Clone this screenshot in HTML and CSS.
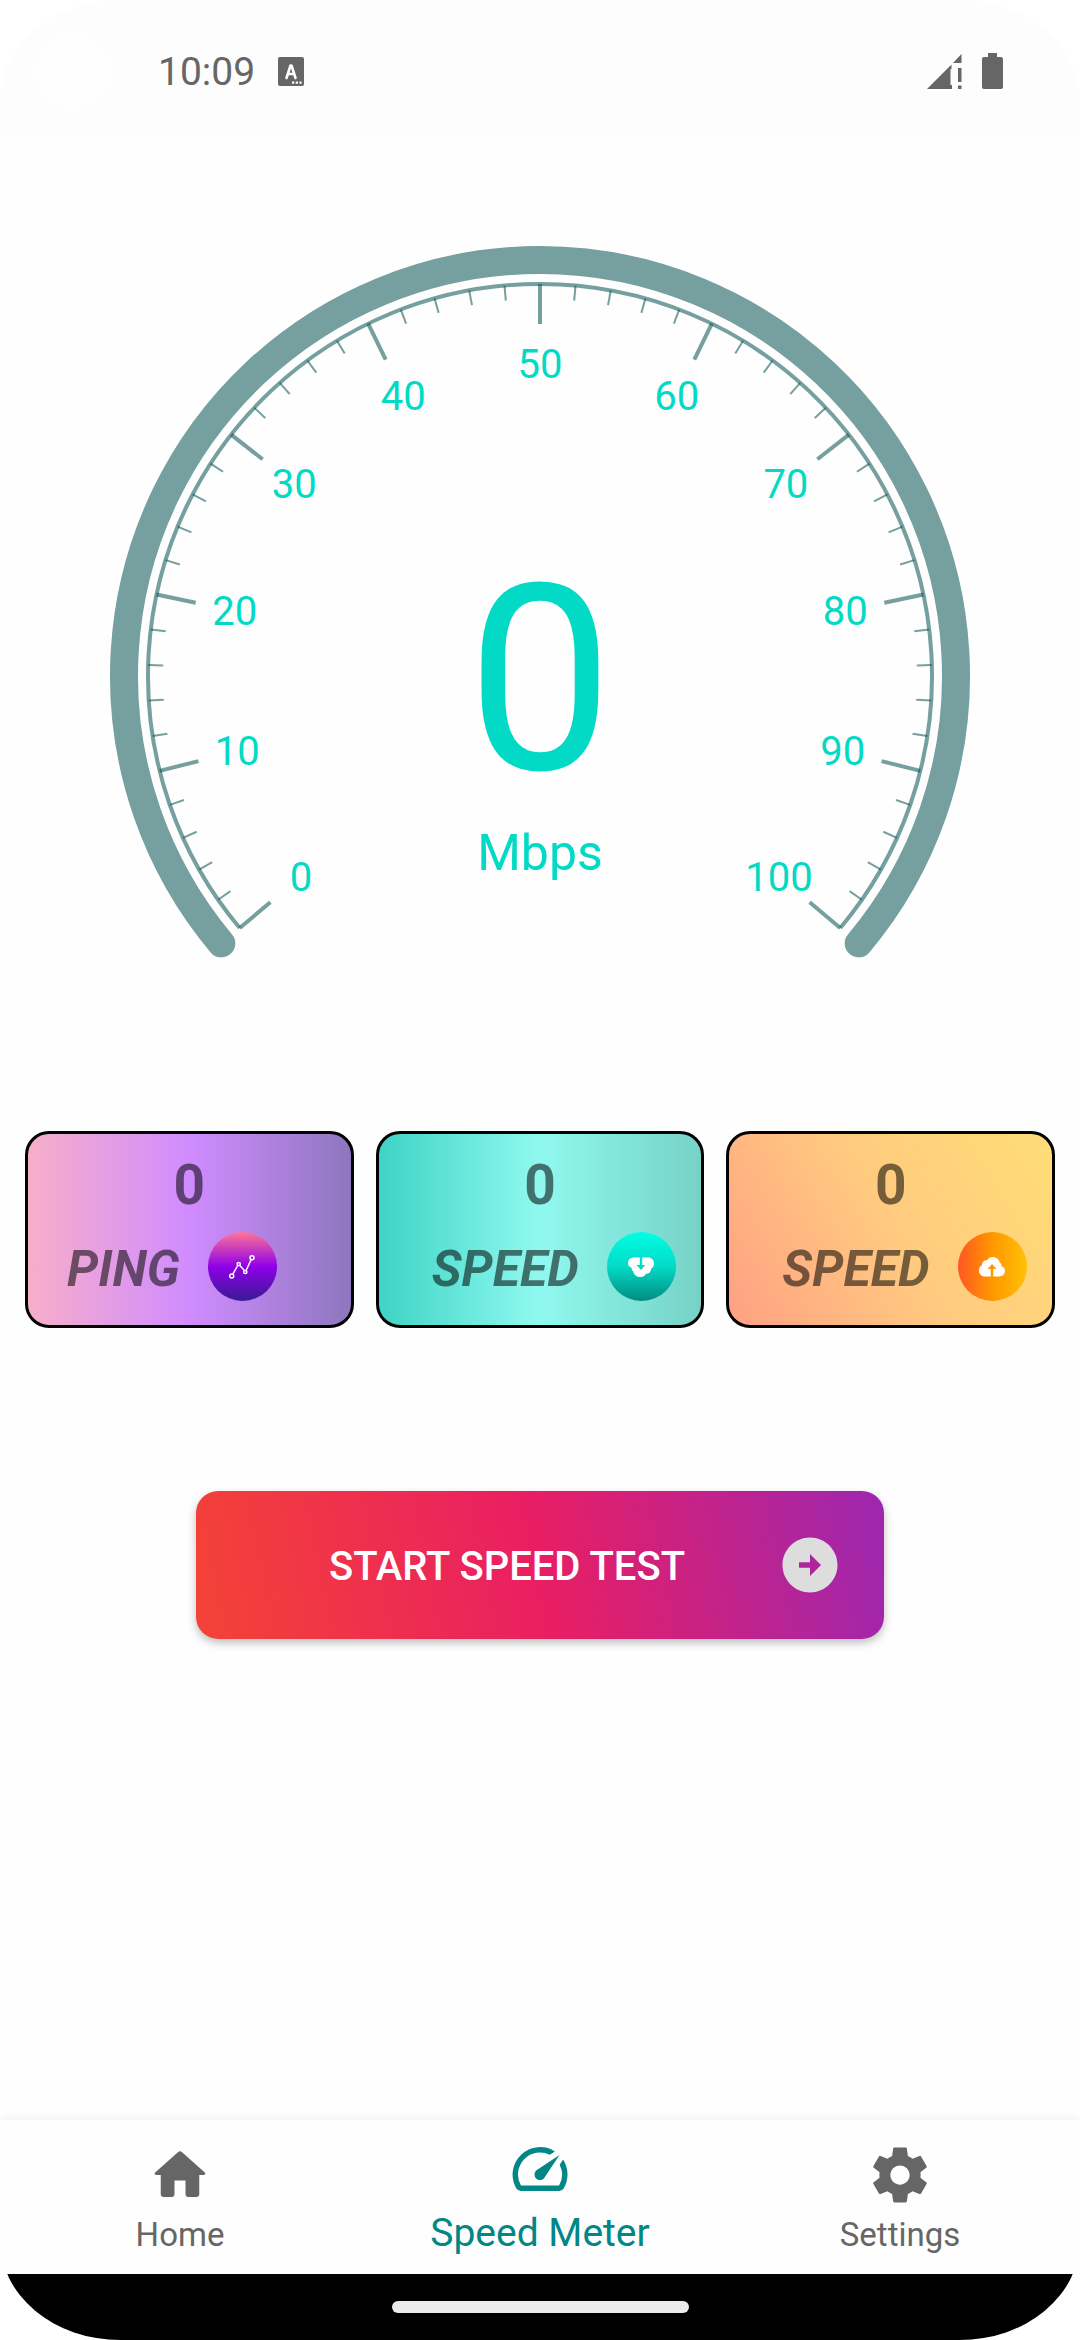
FILE: index.html
```html
<!DOCTYPE html>
<html lang="en">
<head>
    <meta charset="UTF-8">
    <meta name="viewport" content="width=device-width, initial-scale=1.0">
    <title>Speed Meter</title>
    <link rel="stylesheet" href="styles.css">
</head>
<body>
    <div class="screen">
        <header class="status-bar">
            <span class="camera"></span>
            <span class="time">10:09</span>
            <svg class="status-app" width="26" height="29" viewBox="0 0 26 29">
                <rect width="26" height="29" rx="2" fill="#666"/>
                <path d="M8.500 21L12.500 8.500h1L17.500 21M10 17h6" fill="none" stroke="#fff" stroke-width="2.600" stroke-linecap="round" stroke-linejoin="round"/>
                <path d="M14 24.500h2.200v2.200H14zM17.700 24.500h2.200v2.200h-2.200zM21.400 24.500h2.200v2.200h-2.200z" fill="#fff"/>
            </svg>
            <svg class="status-signal" width="35" height="35" viewBox="0 0 35 35" fill="#666">
                <path d="M34.500 0v9H26zM24.500 10.500V15h-1v16h1.500v4H0z"/>
                <path d="M31 14h3.500v14H31zM31 31.500h3.500V35H31z"/>
            </svg>
            <svg class="status-battery" width="21" height="36" viewBox="0 0 21 36" fill="#666">
                <path d="M6 0h9v4h4a2 2 0 0 1 2 2v28a2 2 0 0 1-2 2H2a2 2 0 0 1-2-2V6a2 2 0 0 1 2-2h4z"/>
            </svg>
        </header>

        <main class="content">
            <svg class="gauge" viewBox="0 0 860 712">
                <path class="gauge-band" d="M111.330 697.400A416 416 0 1 1 748.670 697.400"/>
                <path class="gauge-line" d="M129.710 681.970A392 392 0 1 1 730.290 681.970"/>
                <g id="ticks"></g>
                <g id="labels"></g>
                <text class="gauge-value" x="430" y="523">0</text>
                <text class="gauge-unit" x="430" y="624">Mbps</text>
            </svg>

            <section class="cards">
                <div class="card ping">
                    <div class="card-value">0</div>
                    <div class="card-row">
                        <span class="card-label">PING</span>
                        <span class="badge">
                            <svg width="26" height="26" viewBox="-13 -13 26 26" fill="none" stroke="#fff" stroke-width="1.500">
                                <path d="M-9.300 7.300L-4.300-1.500M-2.200-1.500L2.400 3.500M4.200 3.200L9.200-7.500"/>
                                <circle cx="-10.300" cy="9" r="2"/>
                                <circle cx="-3.300" cy="-3" r="1.600"/>
                                <circle cx="3.300" cy="5" r="1.600"/>
                                <circle cx="10" cy="-9.300" r="2"/>
                            </svg>
                        </span>
                    </div>
                </div>
                <div class="card download">
                    <div class="card-value">0</div>
                    <div class="card-row">
                        <span class="card-label">SPEED</span>
                        <span class="badge">
                            <svg class="flip" width="26" height="20" viewBox="0 0 26 20" fill="#fff">
                                <path d="M11.800 19.500H6C2.500 19.500 0 17 0 13.500 0 10.800 1.200 9 3 8.300 2.600 5.500 5 3.200 8 3.300 9.200 1.200 11 0 13.500 0c3.600 0 6.500 2.200 7.300 5.600C22 6.600 22.600 7.800 22.500 9.500 24.800 10 26 11.500 26 13.800c0 3.400-2.500 5.700-6 5.700h-5.800V12H17.500L13 7 8.700 12h3.100z"/>
                            </svg>
                        </span>
                    </div>
                </div>
                <div class="card upload">
                    <div class="card-value">0</div>
                    <div class="card-row">
                        <span class="card-label">SPEED</span>
                        <span class="badge">
                            <svg width="26" height="20" viewBox="0 0 26 20" fill="#fff">
                                <path d="M11.800 19.500H6C2.500 19.500 0 17 0 13.500 0 10.800 1.200 9 3 8.300 2.600 5.500 5 3.200 8 3.300 9.200 1.200 11 0 13.500 0c3.600 0 6.500 2.200 7.300 5.600C22 6.600 22.600 7.800 22.500 9.500 24.800 10 26 11.500 26 13.800c0 3.400-2.500 5.700-6 5.700h-5.800V12H17.500L13 7 8.700 12h3.100z"/>
                            </svg>
                        </span>
                    </div>
                </div>
            </section>

            <button type="button" class="start">
                <span class="start-text">START SPEED TEST</span>
                <svg width="66" height="66" viewBox="0 0 24 24" fill="#ddd">
                    <path d="M12 2C6.480 2 2 6.480 2 12s4.480 10 10 10 10-4.480 10-10S17.520 2 12 2zm0 14v-3H8v-2h4V8l4 4-4 4z"/>
                </svg>
            </button>
        </main>

        <nav class="nav">
            <a class="nav-item" href="#">
                <svg width="66" height="66" viewBox="0 0 24 24" fill="currentColor">
                    <path d="M10 19v-5h4v5c0 .55.45 1 1 1h3c.55 0 1-.45 1-1v-7h1.700c.46 0 .68-.57.33-.87L12.670 3.600c-.38-.34-.96-.34-1.340 0l-8.360 7.530c-.34.3-.13.87.33.87H5v7c0 .55.45 1 1 1h3c.55 0 1-.45 1-1z"/>
                </svg>
                <span>Home</span>
            </a>
            <a class="nav-item active" href="#">
                <svg width="66" height="66" viewBox="0 0 24 24" fill="currentColor">
                    <path d="M20.380 8.570l-1.230 1.850a8 8 0 0 1-.22 7.580H5.070A8 8 0 0 1 15.580 6.850l1.850-1.230A10 10 0 0 0 3.350 19a2 2 0 0 0 1.720 1h13.850a2 2 0 0 0 1.740-1 10 10 0 0 0-.27-10.440zm-9.790 6.840a2 2 0 0 0 2.830 0l5.660-8.490-8.490 5.660a2 2 0 0 0 0 2.830z"/>
                </svg>
                <span>Speed Meter</span>
            </a>
            <a class="nav-item" href="#">
                <svg width="66" height="66" viewBox="0 0 24 24" fill="currentColor">
                    <path d="M19.430 12.980c.04-.32.07-.64.07-.98s-.03-.66-.07-.98l2.110-1.650c.19-.15.24-.42.12-.64l-2-3.460c-.12-.22-.39-.3-.61-.22l-2.490 1c-.52-.4-1.080-.73-1.690-.98l-.38-2.650C14.460 2.180 14.250 2 14 2h-4c-.25 0-.46.18-.49.42l-.38 2.650c-.61.25-1.170.59-1.690.98l-2.490-1c-.23-.09-.49 0-.61.22l-2 3.460c-.13.22-.07.49.12.64l2.110 1.650c-.04.32-.07.65-.07.98s.03.66.07.98l-2.110 1.650c-.19.15-.24.42-.12.64l2 3.460c.12.22.39.3.61.22l2.490-1c.52.4 1.080.73 1.690.98l.38 2.650c.03.24.24.42.49.42h4c.25 0 .46-.18.49-.42l.38-2.650c.61-.25 1.170-.59 1.690-.98l2.490 1c.23.09.49 0 .61-.22l2-3.460c.12-.22.07-.49-.12-.64l-2.110-1.650zM12 15.500c-1.930 0-3.500-1.570-3.500-3.500s1.570-3.500 3.500-3.500 3.500 1.570 3.500 3.500-1.570 3.500-3.500 3.500z"/>
                </svg>
                <span>Settings</span>
            </a>
        </nav>
        <div class="gesture-bar"><span class="pill"></span></div>
    </div>
    <script src="script.js"></script>
</body>
</html>
```

FILE: styles.css
```css
* {
    box-sizing: border-box;
}
body {
    margin: 0;
    background-color: #fff;
    font-family: Roboto, "Liberation Sans", sans-serif;
}
.screen {
    display: flex;
    flex-direction: column;
    min-height: 100vh;
    border-radius: 120px / 100px;
    overflow: hidden;
    background-color: #fefefe;
}

/* status bar */
.status-bar {
    display: flex;
    align-items: center;
    height: 136px;
    padding: 6px 77px 0 36px;
    background-color: #fdfdfd;
}
.camera {
    width: 74px;
    height: 74px;
    border-radius: 50%;
    background-color: #fefefe;
}
.time {
    margin-left: 48px;
    padding-top: 2px;
    font-size: 39px;
    color: #666;
}
.status-app {
    margin-left: 23px;
}
.status-signal {
    margin-left: auto;
}
.status-battery {
    margin-left: 20px;
}

/* gauge */
.content {
    flex: 1;
    display: flex;
    flex-direction: column;
    align-items: center;
    padding-top: 110px;
}
.gauge {
    width: 860px;
    max-width: 100%;
    overflow: visible;
}
.gauge path,
.gauge line {
    fill: none;
    stroke: rgba(4, 82, 80, 0.55);
}
.gauge .gauge-band {
    stroke-width: 28px;
    stroke-linecap: round;
}
.gauge .gauge-line {
    stroke-width: 4px;
}
.gauge .minor {
    stroke-width: 2px;
}
.gauge .major {
    stroke-width: 4px;
}
.gauge text {
    fill: #03dac5;
    text-anchor: middle;
    font-size: 40px;
}
.gauge .gauge-value {
    font-size: 260px;
}
.gauge .gauge-unit {
    font-size: 50px;
}

/* cards */
.cards {
    display: flex;
    gap: 22px;
    width: 100%;
    margin-top: 173px;
    padding: 0 25px;
}
.card {
    flex: 1;
    height: 197px;
    padding-top: 18px;
    border: 3px solid #000;
    border-radius: 24px;
    color: rgba(0, 0, 0, 0.54);
}
.card-value {
    font-size: 55px;
    font-weight: bold;
    line-height: 66px;
    text-align: center;
}
.card-row {
    display: flex;
    align-items: center;
    gap: 28px;
    margin-top: 14px;
    padding-left: 53px;
}
.ping .card-row {
    padding-left: 39px;
}
.card-label {
    padding-top: 4px;
    font-size: 50px;
    font-weight: bold;
    font-style: italic;
}
.badge {
    display: flex;
    align-items: center;
    justify-content: center;
    width: 69px;
    height: 69px;
    border-radius: 50%;
}
.ping {
    background: linear-gradient(90deg, #f8afc8, #d08cff, #8c76be) border-box;
}
.ping .badge {
    background: linear-gradient(#ff7597, #8f00e8, #3a1a94);
}
.download {
    background: linear-gradient(90deg, #3cd3c5, #90f9ef, #76d1c6) border-box;
}
.download .badge {
    background: linear-gradient(#00ffe5, #03dac5, #018c80);
}
.upload {
    background: linear-gradient(59deg, #ff9f83, #ffca80, #ffde76) border-box;
}
.upload .badge {
    background: linear-gradient(90deg, #ff5722, #ff9800, #ffc107);
}
.flip {
    transform: rotate(180deg);
}

/* start button */
.start {
    display: flex;
    align-items: center;
    width: 688px;
    max-width: 90%;
    height: 148px;
    margin-top: 163px;
    padding: 0 41px;
    border: none;
    border-radius: 22px;
    background: linear-gradient(78deg, #f44336, #e91e63, #9c27b0);
    box-shadow: 0 4px 8px rgba(0, 0, 0, 0.25);
    color: #fff;
    font-family: inherit;
    font-size: 40px;
    font-weight: 500;
    cursor: pointer;
}
.start-text {
    flex: 1;
    padding-top: 2px;
    text-align: center;
}

/* bottom navigation */
.nav {
    display: flex;
    height: 154px;
    background-color: #fefefe;
    box-shadow: 0 -2px 8px rgba(0, 0, 0, 0.06);
}
.nav-item {
    flex: 1;
    display: flex;
    flex-direction: column;
    align-items: center;
    padding-top: 22px;
    color: #666;
    font-size: 33px;
    line-height: 40px;
    text-decoration: none;
}
.nav-item span {
    margin-top: 7px;
}
.nav-item.active {
    padding-top: 16px;
    color: #018786;
    font-size: 39px;
}
.nav-item.active span {
    margin-top: 11px;
}
.gesture-bar {
    display: flex;
    align-items: center;
    justify-content: center;
    height: 66px;
    background-color: #000;
}
.pill {
    width: 297px;
    height: 12px;
    border-radius: 6px;
    background-color: #ececec;
}
```

FILE: script.js
```js
const SVG = "http://www.w3.org/2000/svg";
const ticks = document.getElementById("ticks");
const labels = document.getElementById("labels");

// the scale runs over 260 degrees, from 140 to 400
for (let value = 0; value <= 100; value += 2) {
    const angle = (140 + value * 2.6) * Math.PI / 180;
    const major = value % 10 === 0;
    const inner = major ? 352 : 377;

    const line = document.createElementNS(SVG, "line");
    line.setAttribute("class", major ? "major" : "minor");
    line.setAttribute("x1", 430 + 392 * Math.cos(angle));
    line.setAttribute("y1", 430 + 392 * Math.sin(angle));
    line.setAttribute("x2", 430 + inner * Math.cos(angle));
    line.setAttribute("y2", 430 + inner * Math.sin(angle));
    ticks.appendChild(line);

    if (major) {
        const text = document.createElementNS(SVG, "text");
        text.setAttribute("x", 430 + 312 * Math.cos(angle));
        text.setAttribute("y", 444 + 312 * Math.sin(angle));
        text.textContent = value;
        labels.appendChild(text);
    }
}
```
